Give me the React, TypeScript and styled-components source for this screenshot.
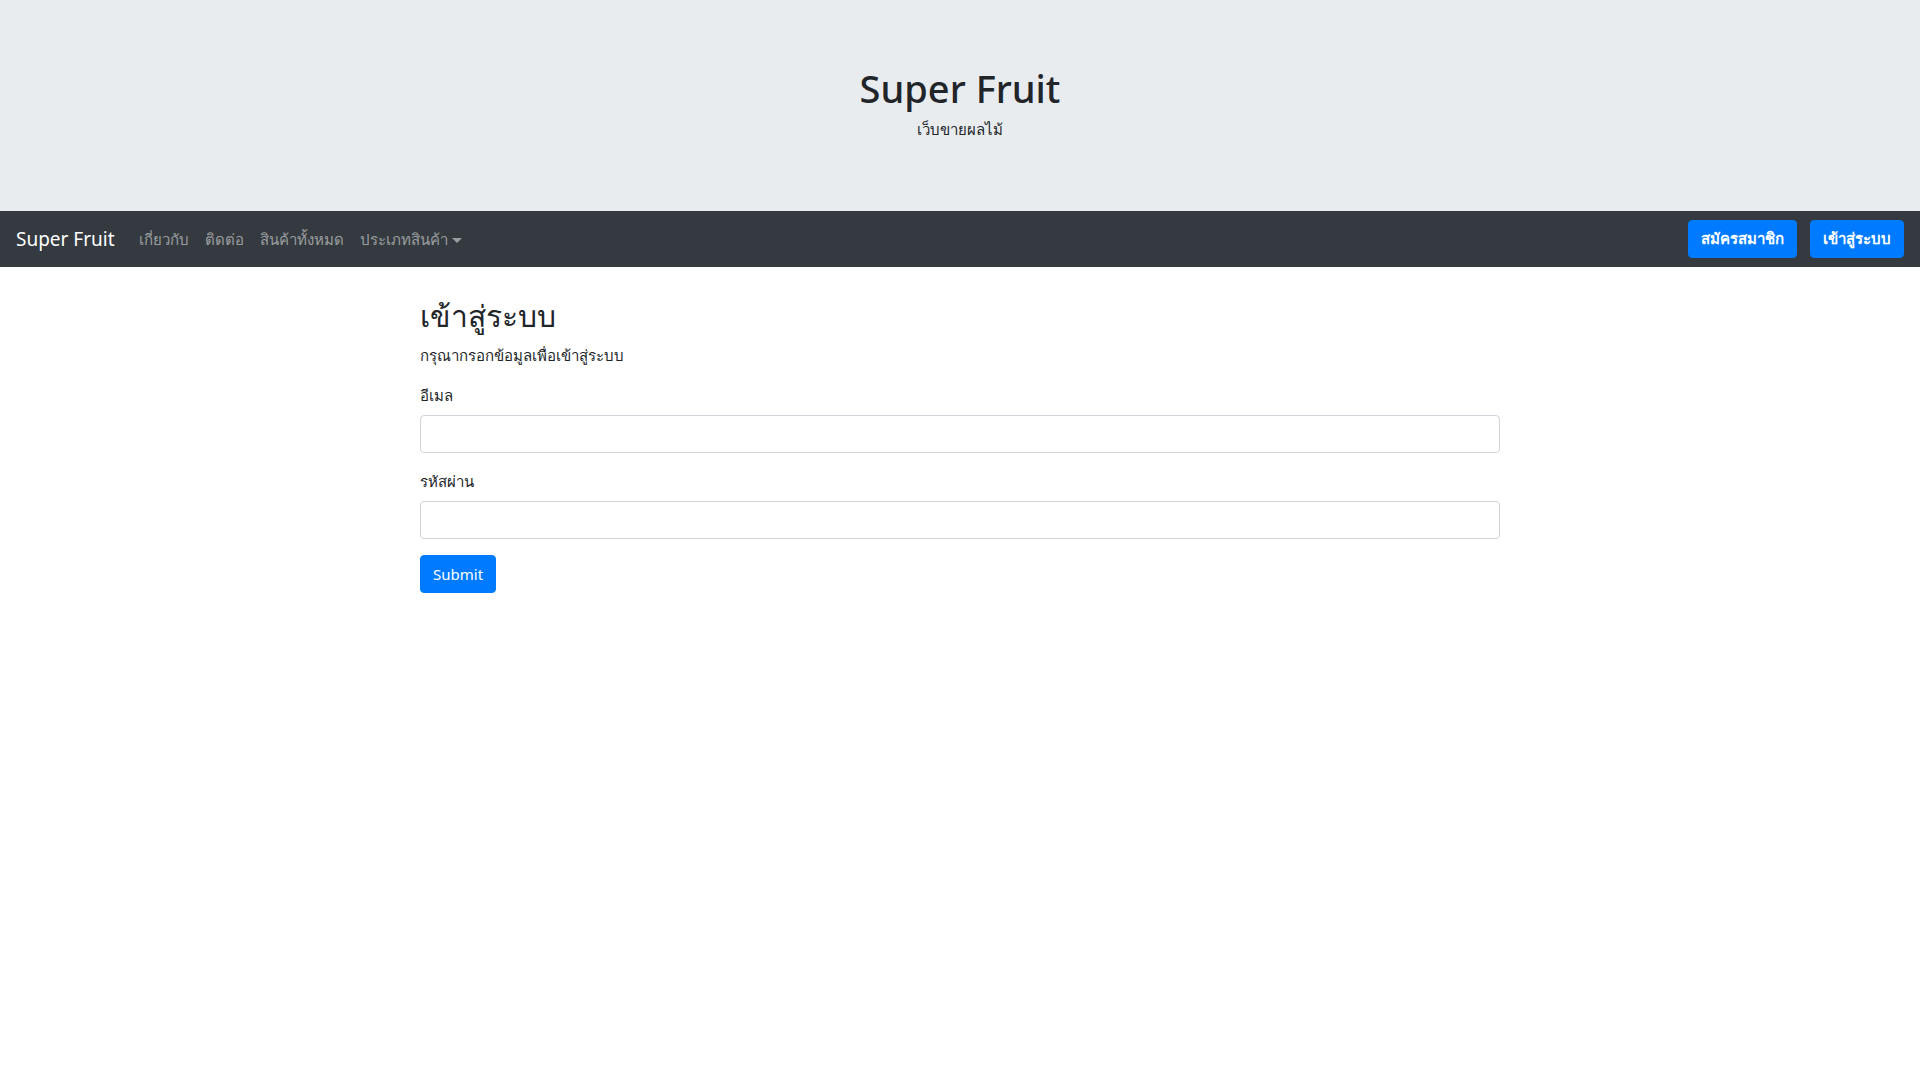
import React from "react";
import styled, { createGlobalStyle } from "styled-components";

const GlobalStyle = createGlobalStyle`
  html, body { margin: 0; padding: 0; background: #fff; }
  body {
    font-family: "Noto Sans", "Open Sans", "DejaVu Sans", sans-serif;
    font-size: 15px;
    line-height: 24px;
    color: #212529;
  }
  * { box-sizing: border-box; }
`;

const Jumbotron = styled.header`
  background: #e9ecef;
  height: 211px;
  padding-top: 64px;
  text-align: center;
`;

const JumboTitle = styled.h1`
  margin: 0 0 5px;
  font-size: 38px;
  font-weight: 500;
  line-height: 48px;
`;

const JumboText = styled.p`
  margin: 0;
  font-size: 15px;
`;

const Navbar = styled.nav`
  background: #343a40;
  height: 56px;
  padding: 0 16px;
  display: flex;
  align-items: center;
`;

const Brand = styled.a`
  color: #fff;
  font-size: 19px;
  margin-right: 16px;
  text-decoration: none;
`;

const NavList = styled.div`
  display: flex;
  align-items: center;
  flex: 1;
`;

const NavLink = styled.a<{ $dropdown?: boolean }>`
  color: rgba(255, 255, 255, 0.5);
  padding: 0 8px;
  font-size: 15px;
  text-decoration: none;
  display: inline-flex;
  align-items: center;
  &::after {
    content: ${(p) => (p.$dropdown ? '""' : "none")};
    display: inline-block;
    margin-left: 4px;
    border-top: 5px solid;
    border-right: 5px solid transparent;
    border-left: 5px solid transparent;
    border-bottom: 0;
    margin-top: 2px;
  }
`;

const NavActions = styled.div`
  display: flex;
  gap: 13px;
`;

const Button = styled.button<{ $bold?: boolean }>`
  background: #007bff;
  border: 1px solid #007bff;
  color: #fff;
  height: 38px;
  padding: 0 12px;
  border-radius: 4px;
  font-family: inherit;
  font-size: 15px;
  font-weight: ${(p) => (p.$bold ? 600 : 400)};
  cursor: pointer;
`;

const Main = styled.main`
  width: 1080px;
  margin: 0 auto;
  padding-top: 30px;
`;

const Heading = styled.h2`
  margin: 0 0 8px;
  font-size: 30px;
  font-weight: 500;
  line-height: 38px;
`;

const Lead = styled.p`
  margin: 0 0 16px;
`;

const FormGroup = styled.div`
  margin-bottom: 16px;
`;

const Label = styled.label`
  display: block;
  margin-bottom: 8px;
`;

const Input = styled.input`
  display: block;
  width: 100%;
  height: 38px;
  border: 1px solid #ced4da;
  border-radius: 4px;
  padding: 6px 12px;
  font-size: 16px;
  font-family: inherit;
  background: #fff;
`;

export default function App() {
  return (
    <>
      <GlobalStyle />
      <Jumbotron>
        <JumboTitle>Super Fruit</JumboTitle>
        <JumboText>เว็บขายผลไม้</JumboText>
      </Jumbotron>
      <Navbar>
        <Brand href="#">Super Fruit</Brand>
        <NavList>
          <NavLink href="#">เกี่ยวกับ</NavLink>
          <NavLink href="#">ติดต่อ</NavLink>
          <NavLink href="#">สินค้าทั้งหมด</NavLink>
          <NavLink href="#" $dropdown>ประเภทสินค้า</NavLink>
        </NavList>
        <NavActions>
          <Button $bold>สมัครสมาชิก</Button>
          <Button $bold>เข้าสู่ระบบ</Button>
        </NavActions>
      </Navbar>
      <Main>
        <Heading>เข้าสู่ระบบ</Heading>
        <Lead>กรุณากรอกข้อมูลเพื่อเข้าสู่ระบบ</Lead>
        <form onSubmit={(e) => e.preventDefault()}>
          <FormGroup>
            <Label htmlFor="email">อีเมล</Label>
            <Input id="email" type="email" />
          </FormGroup>
          <FormGroup>
            <Label htmlFor="password">รหัสผ่าน</Label>
            <Input id="password" type="password" />
          </FormGroup>
          <Button type="submit">Submit</Button>
        </form>
      </Main>
    </>
  );
}
